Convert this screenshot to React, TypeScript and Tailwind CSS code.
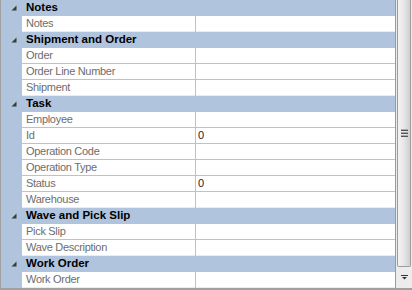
import React from 'react';

type Cat = { name: string; props: { label: string; value?: string }[] };

const cats: Cat[] = [
  { name: 'Notes', props: [{ label: 'Notes' }] },
  {
    name: 'Shipment and Order',
    props: [{ label: 'Order' }, { label: 'Order Line Number' }, { label: 'Shipment' }],
  },
  {
    name: 'Task',
    props: [
      { label: 'Employee' },
      { label: 'Id', value: '0' },
      { label: 'Operation Code' },
      { label: 'Operation Type' },
      { label: 'Status', value: '0' },
      { label: 'Warehouse' },
    ],
  },
  { name: 'Wave and Pick Slip', props: [{ label: 'Pick Slip' }, { label: 'Wave Description' }] },
  { name: 'Work Order', props: [{ label: 'Work Order' }] },
];

function Expander() {
  return (
    <svg width="6" height="6" viewBox="0 0 6 6" className="block">
      <polygon points="5.5,0.5 5.5,5.5 0.5,5.5" fill="#3a3a3a" />
    </svg>
  );
}

function CategoryRow({ name }: { name: string }) {
  return (
    <div className="flex h-4 items-center bg-[#b0c4de]">
      <div className="flex w-[25px] shrink-0 justify-center pl-[1px]">
        <Expander />
      </div>
      <span className="text-[11.5px] font-bold leading-none text-black">{name}</span>
    </div>
  );
}

function PropRow({ label, value, last }: { label: string; value?: string; last: boolean }) {
  const line = last ? 'border-[#e9ecf1]' : 'border-[#b0c4de]';
  return (
    <div className="flex h-4 bg-[#b0c4de]">
      <div className="w-[21px] shrink-0" />
      <div className={`flex w-[173px] shrink-0 items-center border-b bg-white pl-[4px] ${line}`}>
        <span className="text-[11px] leading-none tracking-[-0.3px] text-[#6d6d6d]">{label}</span>
      </div>
      <div className="w-px shrink-0 bg-[#b0c4de]" />
      <div className={`flex flex-1 items-center border-b bg-white pl-[2px] ${line}`}>
        <span className="text-[11px] leading-none text-[#222]">{value}</span>
      </div>
    </div>
  );
}

function ScrollBar() {
  return (
    <div className="flex w-[17px] shrink-0 flex-col border-l border-[#9a9a9a] bg-[#ececec]">
      <div className="mx-[1px] flex h-[267px] items-center justify-center rounded-b-[2px] border border-t-0 border-[#9c9c9c] bg-gradient-to-r from-[#f3f3f3] via-[#e6e6e6] to-[#cfcfcf]">
        <div className="flex flex-col gap-[1px]">
          <div className="h-[2px] w-[7px] border-b border-[#555] bg-[#aaa]" />
          <div className="h-[2px] w-[7px] border-b border-[#555] bg-[#aaa]" />
          <div className="h-[2px] w-[7px] border-b border-[#555] bg-[#aaa]" />
        </div>
      </div>
      <div className="flex flex-1 items-center justify-center">
        <svg width="7" height="5" viewBox="0 0 7 5">
          <rect x="0" y="0" width="7" height="1" fill="#333" />
          <polygon points="1,2 6,2 3.5,4.5" fill="#333" />
        </svg>
      </div>
    </div>
  );
}

export default function App() {
  return (
    <div
      className="flex h-[290px] w-[412px] overflow-hidden border-b-2 border-[#a0a0a0] bg-[#ececec]"
      style={{ fontFamily: '"Liberation Sans", Arial, sans-serif' }}
    >
      <div className="flex w-[395px] shrink-0 flex-col border-l border-[#a0a0a0]">
        {cats.map((c) => (
          <React.Fragment key={c.name}>
            <CategoryRow name={c.name} />
            {c.props.map((p, i) => (
              <PropRow key={p.label} label={p.label} value={p.value} last={i === c.props.length - 1} />
            ))}
          </React.Fragment>
        ))}
      </div>
      <ScrollBar />
    </div>
  );
}
